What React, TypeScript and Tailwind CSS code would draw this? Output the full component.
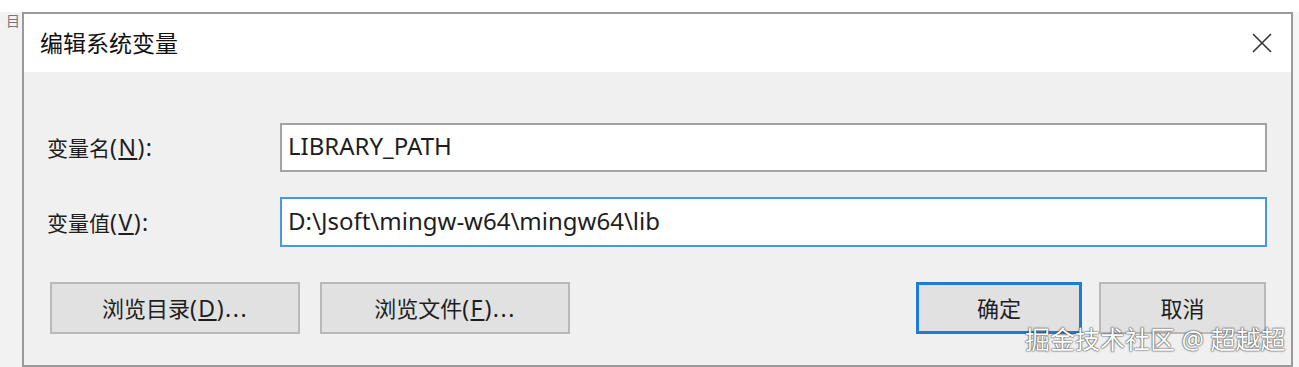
import React from 'react';

const cjk = "font-['Noto_Sans','Noto_Sans_CJK_SC',sans-serif]";

// Latin bits inside CJK labels render wider in the original UI font
function Latin({ children }: { children: React.ReactNode }) {
  return <span className="text-[23px] tracking-[1.5px]">{children}</span>;
}

function Label({ text, hotkey }: { text: string; hotkey: string }) {
  return (
    <div className={`self-center w-[256px] shrink-0 pl-[23px] text-[21px] text-[#1e1e1e] ${cjk}`}>
      {text}
      <Latin>
        (<span className="underline underline-offset-2">{hotkey}</span>):
      </Latin>
    </div>
  );
}

function Field({ value, focused }: { value: string; focused?: boolean }) {
  return (
    <div
      className={`flex-1 flex items-center bg-white border-2 px-[6px] pb-[3px] text-[24px] text-[#1e1e1e] ${cjk} ${
        focused ? 'border-[#4a98dc]' : 'border-[#a3a3a3]'
      }`}
    >
      {value}
    </div>
  );
}

function Button({
  children,
  width,
  primary,
}: {
  children: React.ReactNode;
  width: string;
  primary?: boolean;
}) {
  return (
    <div
      className={`${width} h-[52px] flex items-center justify-center bg-[#e1e1e1] text-[22px] text-[#1e1e1e] ${cjk} ${
        primary ? 'border-[3px] border-[#1c7cd6]' : 'border-2 border-[#b9b9b9]'
      }`}
    >
      {children}
    </div>
  );
}

export default function App() {
  return (
    <div className="relative w-[1299px] h-[367px] overflow-hidden bg-white flex flex-col">
      <div className="h-[12px] shrink-0 bg-white" />
      <div className="flex flex-1">
        <div className="w-[22px] shrink-0 bg-[#f2f2f2] pl-[6px]">
          <span className={`block text-[14px] leading-[18px] text-[#777] ${cjk}`}>目</span>
        </div>
        <div className="w-[1271px] shrink-0 h-[355px] border-2 border-[#9a9a9a] flex flex-col">
          <div className="h-[58px] shrink-0 bg-white flex items-center justify-between pl-[16px] pr-[18px]">
            <span className={`text-[23px] text-[#111] ${cjk}`}>编辑系统变量</span>
            <svg width="22" height="22" viewBox="0 0 22 22">
              <path d="M2 2L20 20M20 2L2 20" stroke="#333" strokeWidth="1.6" />
            </svg>
          </div>
          <div className="flex-1 bg-[#f0f0f0] flex flex-col pt-[51px] pr-[24px]">
            <div className="flex h-[49px]">
              <Label text="变量名" hotkey="N" />
              <Field value="LIBRARY_PATH" />
            </div>
            <div className="flex h-[50px] mt-[25px]">
              <Label text="变量值" hotkey="V" />
              <Field value="D:\Jsoft\mingw-w64\mingw64\lib" focused />
            </div>
            <div className="flex mt-[35px] pl-[26px]">
              <div className="flex gap-[20px]">
                <Button width="w-[250px]">
                  浏览目录
                  <Latin>
                    (<span className="underline underline-offset-2">D</span>)...
                  </Latin>
                </Button>
                <Button width="w-[250px]">
                  浏览文件
                  <Latin>
                    (<span className="underline underline-offset-2">F</span>)...
                  </Latin>
                </Button>
              </div>
              <div className="ml-auto flex gap-[17px] pr-[1px]">
                <Button width="w-[166px]" primary>
                  确定
                </Button>
                <Button width="w-[167px]">取消</Button>
              </div>
            </div>
          </div>
        </div>
        <div className="flex-1 bg-[#f6f6f6]" />
      </div>
      <div
        className={`absolute left-[1025px] top-[321px] text-[25px] text-white whitespace-nowrap ${cjk} [text-shadow:0_0_2px_#333,0_0_1px_#333]`}
      >
        掘金技术社区 @ 超越超
      </div>
    </div>
  );
}
